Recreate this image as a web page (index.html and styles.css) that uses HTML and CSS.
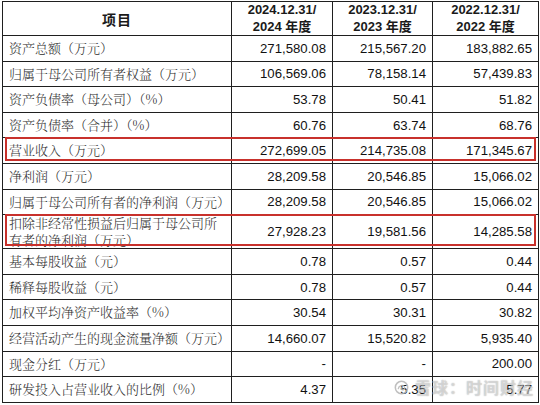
FILE: index.html
```html
<!DOCTYPE html>
<html lang="zh-CN">
<head>
<meta charset="utf-8">
<title>主要财务指标</title>
<link rel="stylesheet" href="styles.css">
</head>
<body>
<div class="sheet">
  <table class="fin">
    <colgroup>
      <col class="c-label">
      <col class="c-y1">
      <col class="c-y2">
      <col class="c-y3">
    </colgroup>
    <thead>
      <tr class="head">
        <th class="item">项目</th>
        <th>2024.12.31/<br>2024 <span class="cjk">年度</span></th>
        <th>2023.12.31/<br>2023 <span class="cjk">年度</span></th>
        <th>2022.12.31/<br>2022 <span class="cjk">年度</span></th>
      </tr>
    </thead>
    <tbody>
      <tr><td class="label">资产总额（万元）</td><td>271,580.08</td><td>215,567.20</td><td>183,882.65</td></tr>
      <tr><td class="label">归属于母公司所有者权益（万元）</td><td>106,569.06</td><td>78,158.14</td><td>57,439.83</td></tr>
      <tr><td class="label">资产负债率（母公司）（%）</td><td>53.78</td><td>50.41</td><td>51.82</td></tr>
      <tr><td class="label">资产负债率（合并）（%）</td><td>60.76</td><td>63.74</td><td>68.76</td></tr>
      <tr><td class="label">营业收入（万元）</td><td>272,699.05</td><td>214,735.08</td><td>171,345.67</td></tr>
      <tr><td class="label">净利润（万元）</td><td>28,209.58</td><td>20,546.85</td><td>15,066.02</td></tr>
      <tr><td class="label">归属于母公司所有者的净利润（万元）</td><td>28,209.58</td><td>20,546.85</td><td>15,066.02</td></tr>
      <tr class="double"><td class="label wrap">扣除非经常性损益后归属于母公司所<br>有者的净利润（万元）</td><td>27,928.23</td><td>19,581.56</td><td>14,285.58</td></tr>
      <tr><td class="label">基本每股收益（元）</td><td>0.78</td><td>0.57</td><td>0.44</td></tr>
      <tr><td class="label">稀释每股收益（元）</td><td>0.78</td><td>0.57</td><td>0.44</td></tr>
      <tr><td class="label">加权平均净资产收益率（%）</td><td>30.54</td><td>30.31</td><td>30.82</td></tr>
      <tr><td class="label">经营活动产生的现金流量净额（万元）</td><td>14,660.07</td><td>15,520.82</td><td>5,935.40</td></tr>
      <tr><td class="label">现金分红（万元）</td><td>-</td><td>-</td><td>200.00</td></tr>
      <tr><td class="label">研发投入占营业收入的比例（%）</td><td>4.37</td><td>5.35</td><td>5.77</td></tr>
    </tbody>
  </table>
  <div class="mark mark-revenue"></div>
  <div class="mark mark-profit"></div>
  <div class="watermark">
    <svg class="logo" width="15" height="15" viewBox="0 0 16 16" aria-hidden="true">
      <circle cx="8" cy="8" r="6.6" fill="none" stroke="#b5b5b5" stroke-width="1.6"/>
      <path d="M4.6 9.2 C5 5.6 9.8 4.6 11.2 7.4 C12 9.2 10.2 11.2 8.4 10.4 C7 9.8 7.6 8 8.8 8.3" fill="none" stroke="#b5b5b5" stroke-width="1.4" stroke-linecap="round"/>
    </svg>
    <span class="wm-text">雪球：时间财经</span>
  </div>
</div>
</body>
</html>
```
FILE: styles.css
```css
html, body {
  margin: 0;
  padding: 0;
  background: #ffffff;
}

.sheet {
  position: relative;
  width: 540px;
  height: 405px;
  box-sizing: border-box;
  padding: 1px 0 0 2px;
  overflow: hidden;
}

.fin {
  border-collapse: collapse;
  table-layout: fixed;
  width: 536px;
}

.c-label { width: 229px; }
.c-y1 { width: 101px; }
.c-y2 { width: 100px; }
.c-y3 { width: 106px; }

.fin th,
.fin td {
  border: 1px solid #1f1f1f;
  padding: 0;
  vertical-align: middle;
}

.fin thead th {
  font-family: "Liberation Sans", Arial, "Noto Sans CJK SC", sans-serif;
  font-weight: bold;
  font-size: 13px;
  line-height: 16px;
  color: #1a1a1a;
  text-align: center;
}

.fin .cjk {
  font-family: "Noto Sans CJK SC", sans-serif;
  font-weight: bold;
  font-size: 13px;
}

.fin thead th.item {
  font-family: "Noto Sans CJK SC", sans-serif;
  font-size: 14px;
  letter-spacing: 1px;
}

.head {
  height: 34px;
}

.fin tbody tr {
  height: 25.6px;
}

.fin tbody tr.double {
  height: 34px;
}

.fin td {
  font-family: "Liberation Sans", Arial, sans-serif;
  font-size: 13.2px;
  color: #111111;
  text-align: right;
  padding-right: 6px;
  white-space: nowrap;
}

.fin td.label {
  font-family: "Noto Serif CJK SC", "Noto Sans CJK SC", sans-serif;
  font-weight: 300;
  font-size: 13px;
  color: #2e2e2e;
  text-align: left;
  padding: 0 0 0 6px;
  line-height: 16.5px;
}

.mark {
  position: absolute;
  box-sizing: border-box;
  border: 2px solid #c8312c;
}

.mark-revenue {
  left: 5px;
  top: 137px;
  width: 531px;
  height: 24px;
}

.mark-profit {
  left: 5px;
  top: 214px;
  width: 531px;
  height: 32px;
}

.watermark {
  position: absolute;
  left: 394px;
  top: 375px;
  display: flex;
  align-items: center;
  gap: 6px;
  opacity: 0.85;
}

.logo {
  display: block;
}

.wm-text {
  font-family: "Noto Sans CJK SC", sans-serif;
  font-weight: bold;
  font-size: 16px;
  letter-spacing: 1px;
  color: rgba(245, 245, 245, 0.55);
  text-shadow: 0 0 1px rgba(80, 80, 80, 0.6);
}
```
